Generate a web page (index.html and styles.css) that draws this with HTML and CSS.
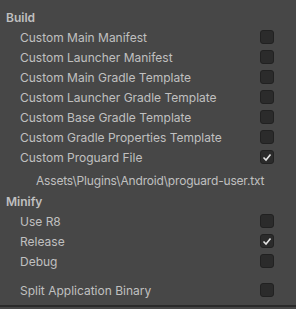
FILE: index.html
```html
<!DOCTYPE html>
<html lang="en">
<head>
  <meta charset="UTF-8">
  <title>Publishing Settings</title>
  <link rel="stylesheet" href="styles.css">
</head>
<body>

  <div class="panel">
    <div class="section-title">Build</div>

    <div class="row">
      <span class="label">Custom Main Manifest</span>
      <span class="toggle"></span>
    </div>
    <div class="row">
      <span class="label">Custom Launcher Manifest</span>
      <span class="toggle"></span>
    </div>
    <div class="row">
      <span class="label">Custom Main Gradle Template</span>
      <span class="toggle"></span>
    </div>
    <div class="row">
      <span class="label">Custom Launcher Gradle Template</span>
      <span class="toggle"></span>
    </div>
    <div class="row">
      <span class="label">Custom Base Gradle Template</span>
      <span class="toggle"></span>
    </div>
    <div class="row">
      <span class="label">Custom Gradle Properties Template</span>
      <span class="toggle"></span>
    </div>
    <div class="row">
      <span class="label">Custom Proguard File</span>
      <span class="toggle checked">
        <svg width="12" height="12" viewBox="0 0 12 12"><polyline points="2.5,6.5 5,9 9.5,3.5" fill="none" stroke="#e4e4e4" stroke-width="1.6"/></svg>
      </span>
    </div>

    <div class="path">Assets\Plugins\Android\proguard-user.txt</div>

    <div class="section-title">Minify</div>

    <div class="row">
      <span class="label">Use R8</span>
      <span class="toggle"></span>
    </div>
    <div class="row">
      <span class="label">Release</span>
      <span class="toggle checked">
        <svg width="12" height="12" viewBox="0 0 12 12"><polyline points="2.5,6.5 5,9 9.5,3.5" fill="none" stroke="#e4e4e4" stroke-width="1.6"/></svg>
      </span>
    </div>
    <div class="row">
      <span class="label">Debug</span>
      <span class="toggle"></span>
    </div>

    <div class="row split">
      <span class="label">Split Application Binary</span>
      <span class="toggle"></span>
    </div>
  </div>

</body>
</html>
```

FILE: styles.css
```css
html, body {
  margin: 0;
  height: 100%;
}

body {
  background-color: #474747;
  color: #c0c0c0;
  font-family: Inter, 'Noto Sans', sans-serif;
  font-size: 12px;
}

.panel {
  height: 307px;
  padding-top: 8px;
  box-sizing: border-box;
  border-bottom: 2px solid #2a2a2a;
}

.section-title {
  height: 20px;
  line-height: 20px;
  padding-left: 6px;
  font-weight: 600;
}

.row {
  display: flex;
  justify-content: space-between;
  height: 20px;
  line-height: 20px;
  padding-left: 20px;
  padding-right: 22px;
}

.row.split {
  margin-top: 9px;
}

.toggle {
  width: 12px;
  height: 12px;
  margin-top: 2px;
  background-color: #2b2b2b;
  border: 1px solid #212121;
  border-radius: 3px;
  display: flex;
  align-items: center;
  justify-content: center;
}

.path {
  height: 24px;
  line-height: 20px;
  padding-top: 3px;
  padding-left: 36px;
  box-sizing: border-box;
  letter-spacing: -0.18px;
}
```
